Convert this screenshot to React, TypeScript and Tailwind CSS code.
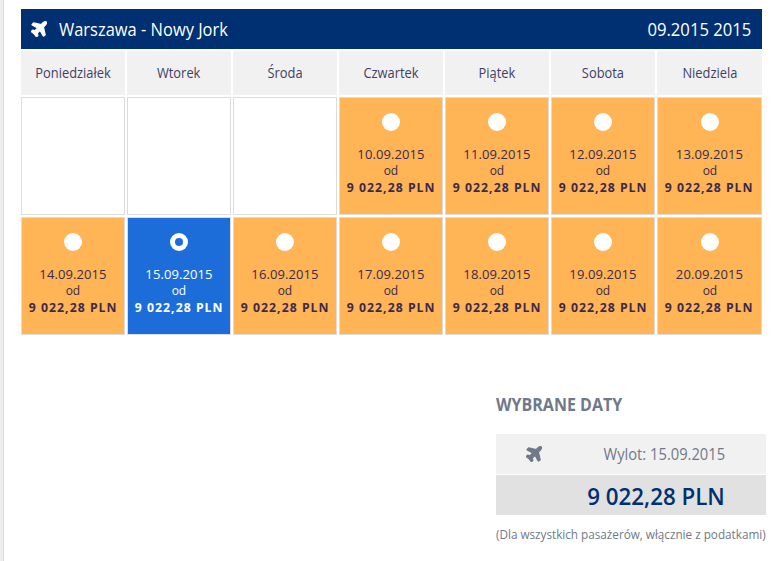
import { useState } from "react";
import clsx from "clsx";

type Day = {
  date: string;
  price: string;
};

const weekdays = ["Poniedziałek", "Wtorek", "Środa", "Czwartek", "Piątek", "Sobota", "Niedziela"];

const price = "9 022,28 PLN";

const days: (Day | null)[] = [
  null,
  null,
  null,
  ...[10, 11, 12, 13, 14, 15, 16, 17, 18, 19, 20].map((d) => ({
    date: `${d}.09.2015`,
    price,
  })),
];

const PlaneIcon = ({ className }: { className?: string }) => (
  <svg
    viewBox="160 80 1480 1480"
    fill="currentColor"
    stroke="currentColor"
    strokeWidth="110"
    strokeLinejoin="round"
    className={className}
  >
    <path d="M1568 160q44 52 12 148t-108 172l-161 161 160 696q5 19-12 33l-128 96q-7 6-19 6-4 0-7-1-15-3-21-16l-279-508-259 259 53 194q5 17-8 31l-96 96q-9 9-23 9h-2q-15-2-24-13l-189-252-252-189q-11-7-13-23-1-13 9-25l96-97q9-9 23-9 6 0 8 1l194 53 259-259-508-279q-14-8-17-24-2-16 9-27l128-128q14-13 30-8l665 159 160-160q76-76 172-108t148 12z" />
  </svg>
);

type DayCellProps = {
  day: Day;
  selected: boolean;
  onSelect: () => void;
};

const DayCell = ({ day, selected, onSelect }: DayCellProps) => (
  <button
    onClick={onSelect}
    className={clsx(
      "flex h-[118px] flex-col items-center border border-[#dcdcdc] pt-[15px] text-[13px] leading-4 whitespace-nowrap",
      selected ? "bg-[#1c6dda] text-white" : "bg-[#ffb455] text-[#3a2a50]"
    )}
  >
    <span className="flex size-[18px] items-center justify-center rounded-full bg-white">
      {selected && <span className="size-2 rounded-full bg-[#1c6dda]" />}
    </span>
    <span className="mt-[15px] tracking-[0.1px]">{day.date}</span>
    <span className="scale-x-[0.92]">od</span>
    <span className="mt-px scale-x-[0.94] font-bold tracking-[1.1px]">{day.price}</span>
  </button>
);

export default function App() {
  const [selected, setSelected] = useState("15.09.2015");

  return (
    <div className="flex h-[561px] overflow-hidden bg-white font-['Open_Sans','Noto_Sans',sans-serif]">
      <div className="w-1 shrink-0 border-r border-[#dadada] bg-[#ececec]" />
      <main className="pt-[9px] pl-[17px]">
        <section className="w-[741px]">
          <header className="flex h-10 items-center bg-[#003071] pr-[11px] pl-[10px] text-[18px] text-white">
            <PlaneIcon className="size-4" />
            <h1 className="ml-3 origin-left scale-x-[0.915]">Warszawa - Nowy Jork</h1>
            <span className="ml-auto origin-right scale-x-[0.925]">09.2015 2015</span>
          </header>
          <div className="mt-0.5 grid grid-cols-[repeat(6,104px)_105px] gap-0.5">
            {weekdays.map((name) => (
              <div
                key={name}
                className="flex h-11 items-center justify-center bg-[#f1f1f1] text-[14px] text-[#423f66]"
              >
                <span className="-mt-px scale-x-[0.92]">{name}</span>
              </div>
            ))}
            {days.map((day, i) =>
              day ? (
                <DayCell
                  key={day.date}
                  day={day}
                  selected={day.date === selected}
                  onSelect={() => setSelected(day.date)}
                />
              ) : (
                <div key={i} className="h-[118px] border border-[#dcdcdc]" />
              )
            )}
          </div>
        </section>

        <section className="mt-[56px] ml-[475px] w-[270px] text-[#70798a]">
          <h2 className="origin-left scale-x-[0.89] text-[18px] leading-[26px] font-bold">
            WYBRANE DATY
          </h2>
          <div className="mt-[17px] flex h-10 items-center bg-[#f1f1f1] pr-[41px] pl-[30px] text-[16px]">
            <PlaneIcon className="size-4" />
            <span className="ml-auto origin-right scale-x-[0.92]">Wylot: {selected}</span>
          </div>
          <div className="mt-px flex h-10 items-center justify-end bg-[#e1e1e1] pt-0.5 pr-[41px] text-[23px] font-semibold text-[#003071]">
            <span className="origin-right scale-x-[0.97]">{price}</span>
          </div>
          <p className="mt-[11px] origin-left scale-x-[0.9] text-[13px] leading-4 whitespace-nowrap">
            (Dla wszystkich pasażerów, włącznie z podatkami)
          </p>
        </section>
      </main>
    </div>
  );
}
